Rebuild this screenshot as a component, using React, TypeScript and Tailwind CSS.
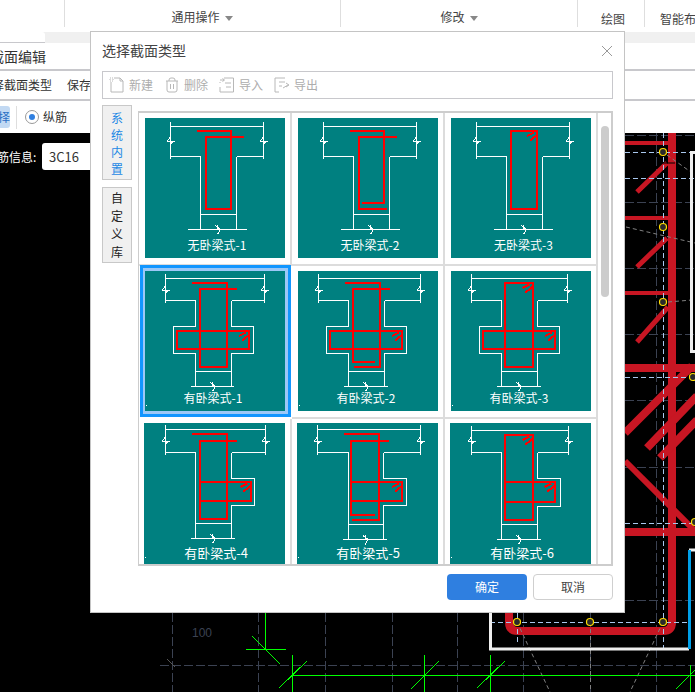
import React from "react";

type Wing = { lx?: number; rx?: number; t: number; b: number };
type Sec = {
  l: number; r: number; top: number; tt: number; tb: number; fb: number; bm: number;
  wl: number; wr: number; sep: number; base: number; bl: number; br: number; wing?: Wing;
};

const hook = (x: number, y: number) =>
  `M${x - 10} ${y + 5.5}L${x - 3} ${y + 2}M${x - 7} ${y + 10}L${x} ${y + 4.5}`;

const brk = (x: number, y: number) => `M${x - 4} ${y}H${x + 4}M${x - 3} ${y}L${x} ${y - 4}M${x + 3} ${y}L${x} ${y + 3}`;

const outline = (s: Sec) => {
  const w = s.wing;
  const left = w && w.lx
    ? `M${s.wl} ${s.fb}V${w.t}H${w.lx}V${w.b}H${s.wl}V${s.base}`
    : `M${s.wl} ${s.fb}V${s.base}`;
  const right = w && w.rx
    ? `M${s.wr} ${s.fb}V${w.t}H${w.rx}V${w.b}H${s.wr}V${s.base}`
    : `M${s.wr} ${s.fb}V${s.base}`;
  const mid = (s.wl + s.wr) / 2;
  return [
    `M${s.l} ${s.tt}V${s.tb}M${s.r} ${s.tt}V${s.tb}M${s.l} ${s.top}H${s.r}`,
    `M${s.l} ${s.fb}H${s.wl}M${s.wr} ${s.fb}H${s.r}`,
    left,
    right,
    `M${s.wl} ${s.sep}H${s.wr}M${s.bl} ${s.base}H${s.br}`,
    `M${mid - 3} ${s.base - 4}L${mid + 2} ${s.base}L${mid - 1} ${s.base + 5}M${mid - 1} ${s.base - 5}V${s.base}`,
    brk(s.l, s.bm),
    brk(s.r, s.bm),
  ].join("");
};

const tee: Sec = { l: 25.5, r: 118.5, top: 8.5, tt: 4, tb: 41, fb: 38.5, bm: 23, wl: 55.5, wr: 91.5, sep: 96.5, base: 111.5, bl: 43, br: 102 };

const sections: { label: string; lx: number; sec: Sec; red: string }[] = [
  { label: "无卧梁式-1", lx: 72, sec: tee, red: "M52 12.5H85.5V90.5H60.5V18.5H98.5" },
  { label: "无卧梁式-2", lx: 72, sec: tee, red: "M52 12.5H85.5V84.5H64M89 90.5H60.5V18.5H99" },
  { label: "无卧梁式-3", lx: 72.5, sec: tee, red: "M60 12.5H86V90.5H60Z" + hook(86, 12.5) },
  {
    label: "有卧梁式-1",
    lx: 68,
    sec: { l: 20.5, r: 119.5, top: 7.5, tt: 3, tb: 32, fb: 29.5, bm: 19, wl: 50.5, wr: 86.5, sep: 100.5, base: 115.5, bl: 46, br: 89, wing: { lx: 28.5, rx: 108.5, t: 55.5, b: 82.5 } },
    red: "M47 11.5H81.5V95.5H54.5V17.5H92M31.5 59.5H104V77.5H31.5Z" + hook(104, 59.5),
  },
  {
    label: "有卧梁式-2",
    lx: 68,
    sec: { l: 20.5, r: 122.5, top: 7.5, tt: 3, tb: 32, fb: 29.5, bm: 19, wl: 50.5, wr: 86.5, sep: 100.5, base: 115.5, bl: 46, br: 90, wing: { lx: 28.5, rx: 108.5, t: 55.5, b: 82.5 } },
    red: "M47 11.5H81.5V95.5H56M77 91H54.5V17.5H92M31.5 59.5H104V77.5H31.5Z" + hook(104, 59.5),
  },
  {
    label: "有卧梁式-3",
    lx: 68,
    sec: { l: 20.5, r: 116.5, top: 7.5, tt: 3, tb: 32, fb: 29.5, bm: 19, wl: 50.5, wr: 86.5, sep: 100.5, base: 115.5, bl: 46, br: 90, wing: { lx: 28.5, rx: 108.5, t: 55.5, b: 82.5 } },
    red: "M53.5 11.5H81.5V95.5H53.5ZM31.5 59.5H104V77.5H31.5Z" + hook(81.5, 11.5) + hook(104, 59.5),
  },
  {
    label: "有卧梁式-4",
    lx: 72,
    sec: { l: 21.5, r: 121.5, top: 6.5, tt: 2, tb: 32, fb: 29.5, bm: 18, wl: 51.5, wr: 87.5, sep: 100.5, base: 115.5, bl: 47, br: 91, wing: { rx: 110.5, t: 55.5, b: 82.5 } },
    red: "M48 11H83V95.5H55.5V17.5H93M55.5 58.5H106.5V77.5H55.5" + hook(106.5, 58.5),
  },
  {
    label: "有卧梁式-5",
    lx: 71,
    sec: { l: 20.5, r: 123.5, top: 6.5, tt: 2, tb: 32, fb: 29.5, bm: 18, wl: 51.5, wr: 86.5, sep: 101.5, base: 116.5, bl: 46, br: 90, wing: { rx: 109.5, t: 55.5, b: 82.5 } },
    red: "M47 11H81.5V96.5H55M78 91.5H53.5V17.5H91.5M53.5 58.5H105V77.5H53.5" + hook(105, 58.5),
  },
  {
    label: "有卧梁式-6",
    lx: 72,
    sec: { l: 21.5, r: 118.5, top: 7.5, tt: 3, tb: 32, fb: 29.5, bm: 18, wl: 51.5, wr: 87.5, sep: 101.5, base: 116.5, bl: 47, br: 91, wing: { rx: 110.5, t: 55.5, b: 83.5 } },
    red: "M54.5 11.5H82.5V96.5H54.5ZM54.5 58.5H104.5V78.5H54.5" + hook(82.5, 11.5) + hook(104.5, 58.5),
  },
];

function SectionCard({ index }: { index: number }) {
  const item = sections[index];
  const selected = index === 3;
  const lastRow = index >= 6;
  // the third row of pictures sits a pixel higher and is a pixel larger in the shot
  const box = selected
    ? "-mt-px ml-px w-[152px] border-r border-b border-transparent pl-[5px] pt-[6px] shadow-[inset_0_0_0_3px_#1296ff,inset_0_0_0_6px_#9cc8f7]"
    : lastRow
      ? "w-[153px] border-r-2 border-b-2 border-[#dcdcdc] pl-[5px] pt-[4px]"
      : "w-[153px] border-r-2 border-b-2 border-[#dcdcdc] pl-[6px] pt-[5px]";
  const size = lastRow ? 141 : 140;
  return (
    <div className={`h-[153px] shrink-0 ${box}`}>
      <svg
        viewBox={`0 0 ${size} ${size}`}
        className={lastRow ? "block h-[141px] w-[141px] bg-[#008080]" : "block h-[140px] w-[140px] bg-[#008080]"}
        shapeRendering="crispEdges"
      >
        <path d={outline(item.sec)} fill="none" stroke="#fff" strokeWidth="1" />
        <path d={item.red} fill="none" stroke="#f00" strokeWidth="2" />
        {index >= 3 && <rect x="1" y="134" width="1" height="1" fill="#fff" />}
        <text
          x={item.lx}
          y={lastRow ? 134.5 : 132}
          textAnchor="middle"
          fill="#fff"
          fontSize={lastRow ? 13 : 12}
          fontFamily="'Noto Sans CJK SC', sans-serif"
        >
          {item.label}
        </text>
      </svg>
    </div>
  );
}

function ToolItem({ label, children }: { label: string; children: React.ReactNode }) {
  return (
    <div className="flex items-center">
      <svg viewBox="0 0 16 16" className="h-4 w-4 shrink-0" fill="none" stroke="#b8b8b8" strokeWidth="1">
        {children}
      </svg>
      <span className="ml-[4px] text-[12px] leading-4 text-[#adadad]">{label}</span>
    </div>
  );
}

function Caret() {
  return <span className="ml-[5px] mt-[2px] h-0 w-0 border-x-[4px] border-t-[5px] border-x-transparent border-t-[#888]" />;
}

const gridV = [172, 258, 325, 392, 457, 523, 590];
const gridH = [135, 202, 268, 334, 400, 467, 600];
const pins: [number, number][] = [
  [663, 152], [663, 227], [663, 302], [693, 377], [695, 522], [517, 622], [590, 622], [663, 622],
];

function Canvas() {
  return (
    <svg viewBox="0 133 695 559" className="block h-full w-full">
      <g stroke="#3b4252" strokeWidth="1" strokeDasharray="9 3" fill="none">
        {gridV.map((x) => (
          <path key={x} d={`M${x + 0.5} 613V692`} />
        ))}
        <path d="M656.5 133V692" />
        {gridH.map((y) => (
          <path key={y} d={`M625 ${y + 0.5}H695`} />
        ))}
        <path d="M160 665.5H695" />
      </g>
      <path d="M167 659L175 667" stroke="#555" fill="none" />
      <text x="192" y="637" fill="#3b4252" fontSize="12" fontFamily="'Liberation Sans', sans-serif">
        100
      </text>

      <g stroke="#c81623" fill="none">
        <path d="M509 600V622Q509 631 518 631H663Q672 631 672 622V133" strokeWidth="8" />
        <path d="M625 143H672M625 218H672M625 293H672" strokeWidth="4" />
        <path d="M667 163L637 192M667 238L637 267M668 307L637 342" strokeWidth="5" />
        <path d="M625 368H695M625 532H695" strokeWidth="8" />
        <path d="M625 433L692 366M647 448L697 396M660 458L697 420" strokeWidth="8" />
        <path d="M625 461L695 531" strokeWidth="6" />
      </g>

      <g stroke="#a9c8ee" strokeWidth="1" strokeDasharray="5 3" fill="none">
        <path d="M663.5 133V648M517.5 613V645" />
        <path d="M625 152.5H695M625 178.5H695M625 377.5H695M625 523.5H695M490 622.5H689" />
      </g>
      <path d="M663 163H675" stroke="#000" fill="none" />

      <g stroke="#808080" strokeWidth="1" strokeDasharray="4 3" fill="none">
        <path d="M517 622L550 692M590.5 622V692M663 622L630 692" />
        <path d="M626 227L695 243M667 155L695 175M668 302L692 300" />
      </g>

      {pins.map(([x, y]) => (
        <circle key={`${x}-${y}`} cx={x} cy={y} r="3.5" fill="#2a2a2a" stroke="#ffdd00" strokeWidth="1.2" />
      ))}

      <g stroke="#eeeeee" strokeWidth="3" fill="none">
        <path d="M490.5 613V649H689" />
        <path d="M695 152.5H691.5V351.5H695" />
        <path d="M689 550H695" />
      </g>
      <path d="M689.5 550V649" stroke="#00a0e9" strokeWidth="3" fill="none" />

      <g stroke="#00ff00" strokeWidth="1" fill="none" shapeRendering="crispEdges">
        <path d="M265.5 613V649M246 649.5H286M252 636L280 664" />
        <path d="M292.5 655V692M279 688L307 661M292 675.5H695" />
        <path d="M424.5 655V692M411 689L439 661" />
        <path d="M490.5 655V692M477 688L505 661" />
        <path d="M690.5 665V692M676 689L695 670" />
      </g>
    </svg>
  );
}

export default function App() {
  return (
    <div className="relative flex h-[692px] w-[695px] flex-col overflow-hidden bg-white font-['Noto_Sans_CJK_SC',sans-serif] text-[12px] text-[#444]">
      {/* ribbon */}
      <div className="flex h-[32px] shrink-0 items-start">
        <div className="h-[27px] w-[65px] border-r border-[#dedede]" />
        <div className="flex h-[27px] w-[276px] items-center justify-center border-r border-[#dedede] pr-[1px] pt-[7px]">
          通用操作
          <Caret />
        </div>
        <div className="flex h-[27px] w-[237px] items-center justify-center border-r border-[#dedede] pt-[7px]">
          修改
          <Caret />
        </div>
        <div className="flex h-[27px] w-[67px] items-center justify-center border-r border-[#dedede] pl-[4px] pt-[11px]">
          绘图
        </div>
        <div className="h-[27px] flex-1 overflow-hidden whitespace-nowrap pl-[15px] pt-[11px] leading-4">智能布</div>
      </div>

      {/* tab strip */}
      <div className="h-[11px] shrink-0 bg-[#f0f0f0]">
        <div className="h-[11px] w-[45px] overflow-hidden rounded-tr-[3px] border-b border-[#c8c8cc] bg-white pl-[3px] pt-[6px] leading-4 text-[#555]">
          - 95
        </div>
      </div>

      {/* panel head */}
      <div className="h-[28px] shrink-0 overflow-hidden whitespace-nowrap border-b-2 border-[#c8c8cc] pl-0 text-[14px] leading-[26px] text-[#333]">
        <span className="-ml-[10px] inline-block">截面编辑</span>
      </div>
      <div className="flex h-[30px] shrink-0 items-center overflow-hidden whitespace-nowrap border-b-2 border-[#c8c8cc] text-[#333]">
        <span className="-ml-[8px]">择截面类型</span>
        <span className="ml-[15px]">保存</span>
      </div>
      <div className="flex h-[32px] shrink-0 items-center text-[#333]">
        <div className="flex h-[22px] w-[10px] items-center justify-end overflow-hidden rounded-r-[3px] bg-[#c2d9f3] text-[#2a6fc4]">择</div>
        <div className="ml-[6px] h-[23px] w-px bg-[#dedede]" />
        <div className="ml-[8px] flex h-[14px] w-[14px] items-center justify-center rounded-full border border-[#999]">
          <div className="h-[6px] w-[6px] rounded-full bg-[#2f7fe0]" />
        </div>
        <span className="ml-[4px]">纵筋</span>
      </div>

      {/* drawing canvas */}
      <div className="relative min-h-0 flex-1 bg-black">
        <Canvas />
        <div className="absolute left-0 top-[10px] flex items-center text-white">
          <div className="w-[36px] overflow-hidden whitespace-nowrap">
            <span className="-ml-[3px] inline-block">筋信息:</span>
          </div>
          <div className="ml-[6px] flex h-[27px] w-[60px] items-center rounded-[3px] bg-white pl-[7px] text-[13px] text-[#333]">3C16</div>
        </div>
      </div>

      {/* dialog */}
      <div className="absolute left-[90px] top-[31px] flex h-[582px] w-[535px] flex-col border border-[#c4c4c4] bg-white px-[11px]">
        <div className="flex h-[39px] shrink-0 items-center justify-between pb-[2px]">
          <span className="text-[14px] text-[#444]">选择截面类型</span>
          <svg viewBox="0 0 12 12" className="h-3 w-3" stroke="#999" strokeWidth="1" fill="none">
            <path d="M1 1L11 11M11 1L1 11" />
          </svg>
        </div>

        <div className="flex h-[28px] shrink-0 items-center gap-[11px] border border-[#c8c8cc] pl-[6px]">
          <ToolItem label="新建">
            <path d="M2 5V15H14V4L11 1H5" />
            <path d="M1 1h3v3H1z" strokeDasharray="1 1" />
            <path d="M11 1V4H14" />
          </ToolItem>
          <ToolItem label="删除">
            <path d="M2 4H14M3 4V13A2 2 0 0 0 5 15H11A2 2 0 0 0 13 13V4M5 4V3A2 2 0 0 1 7 1H9A2 2 0 0 1 11 3V4M6.5 7V12M9.5 7V12" />
          </ToolItem>
          <ToolItem label="导入">
            <path d="M5 1H14.5V15H1V10M1 6V5M6 6H12M7 10H12" />
            <path d="M1 3H5M3.5 1.5L5.5 3L3.5 4.5" />
          </ToolItem>
          <ToolItem label="导出">
            <path d="M11 1H1V15H5M5 5H11M5 9H8" />
            <path d="M9 11L14 8M12 6L15 8L12 10" />
          </ToolItem>
        </div>

        <div className="mt-[6px] flex min-h-0 flex-1 gap-[6px]">
          <div className="flex w-[30px] shrink-0 flex-col gap-[7px]">
            <div className="flex h-[75px] flex-col items-center justify-center border border-[#c8c8c8] bg-[#f0f0f0] leading-[17px] text-[#1e88e5]">
              <span>系</span>
              <span>统</span>
              <span>内</span>
              <span>置</span>
            </div>
            <div className="flex h-[76px] flex-col items-center justify-center border border-[#c8c8c8] bg-[#f0f0f0] leading-[18px] text-[#222]">
              <span>自</span>
              <span>定</span>
              <span>义</span>
              <span>库</span>
            </div>
          </div>

          <div className="mt-[6px] flex h-[455px] w-[475px] shrink-0 overflow-hidden border-y-2 border-r-2 border-l border-[#cdcdcd]">
            <div className="grid w-[459px] shrink-0 grid-cols-[153px_153px_153px] content-start">
              {sections.map((s, i) => (
                <SectionCard key={s.label} index={i} />
              ))}
            </div>
            <div className="flex-1 pl-[3px] pt-[13px]">
              <div className="h-[171px] w-[8px] rounded-full bg-[#cccccc]" />
            </div>
          </div>
        </div>

        <div className="flex h-[47px] shrink-0 items-start justify-end gap-[6px] pt-[9px]">
          <button className="h-[26px] w-[80px] rounded-[4px] bg-[#2f7fe0] text-[12px] text-white">确定</button>
          <button className="h-[26px] w-[80px] rounded-[4px] border border-[#cfcfcf] bg-white text-[12px] text-[#444]">取消</button>
        </div>
      </div>
    </div>
  );
}
